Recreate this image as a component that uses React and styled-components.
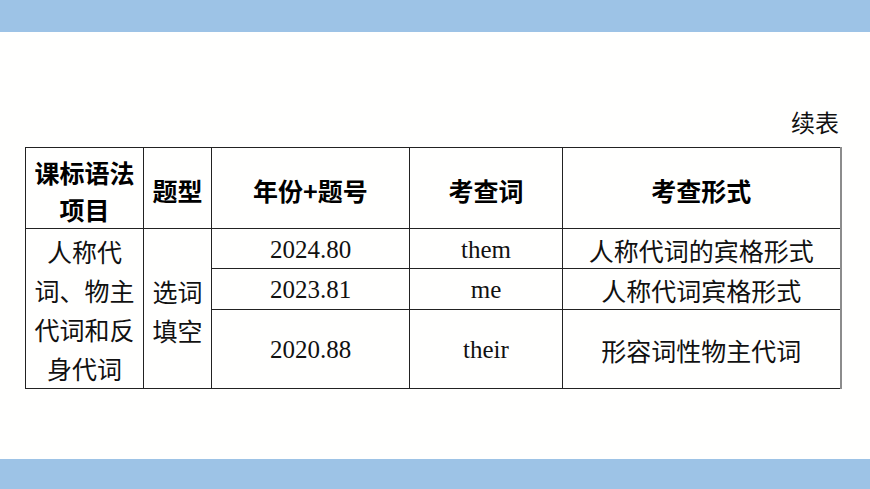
import React from "react";
import styled, { createGlobalStyle } from "styled-components";

const GlobalStyle = createGlobalStyle`
  html, body { margin: 0; padding: 0; background: #ffffff; }
  body { font-family: "Noto Sans CJK SC", "Noto Sans", sans-serif; }
`;

const Page = styled.div`
  width: 870px;
  height: 489px;
  display: flex;
  flex-direction: column;
  background: #ffffff;
  overflow: hidden;
`;

const Bar = styled.div`
  height: ${(p) => p.$h}px;
  flex: none;
  background: #9dc3e6;
`;

const Content = styled.div`
  flex: 1;
  padding: 75px 0 0 25px;
  background: #fffffe;
`;

const Wrap = styled.div`
  width: 815px;
  display: flex;
  flex-direction: column;
`;

const Caption = styled.div`
  text-align: right;
  font-family: "Noto Sans CJK SC", sans-serif;
  font-size: 24px;
  line-height: 30px;
  color: #111;
  padding-right: 1px;
  margin-bottom: 10px;
`;

const Table = styled.table`
  border-collapse: collapse;
  table-layout: fixed;
  width: 815px;
  color: #111;
`;

const Row = styled.tr`
  height: ${(p) => p.$h}px;
`;

const Cell = styled.td`
  border: 1px solid #222;
  padding: ${(p) => (p.$pt != null ? p.$pt : 3)}px 0 0 0;
  text-align: center;
  vertical-align: middle;
  font-family: ${(p) =>
    p.$serif ? '"Liberation Serif", "Times New Roman", serif' : '"Noto Sans CJK SC", sans-serif'};
  font-size: 25px;
  line-height: ${(p) => (p.$lh ? p.$lh : 30)}px;
  font-weight: 400;
  &:last-child { border-right: 2px solid #8c8c8c; }
`;

const Head = styled.th`
  border: 1px solid #222;
  padding: 5px 0 0 0;
  text-align: center;
  vertical-align: middle;
  font-family: "Noto Sans CJK SC", sans-serif;
  font-size: 25px;
  line-height: 37px;
  font-weight: 700;
  color: #000;
  &:last-child { border-right: 2px solid #8c8c8c; }
`;

const rows = [
  { year: "2024.80", word: "them", form: "人称代词的宾格形式", h: 40 },
  { year: "2023.81", word: "me", form: "人称代词宾格形式", h: 40 },
  { year: "2020.88", word: "their", form: "形容词性物主代词", h: 79 },
];

export default function App() {
  return (
    <Page>
      <GlobalStyle />
      <Bar $h={32} />
      <Content>
        <Wrap>
          <Caption>续表</Caption>
          <Table>
            <colgroup>
              <col style={{ width: 118 }} />
              <col style={{ width: 68 }} />
              <col style={{ width: 198 }} />
              <col style={{ width: 153 }} />
              <col style={{ width: 278 }} />
            </colgroup>
            <tbody>
              <Row $h={81}>
                <Head>
                  课标语法
                  <br />
                  项目
                </Head>
                <Head>题型</Head>
                <Head>年份+题号</Head>
                <Head>考查词</Head>
                <Head>考查形式</Head>
              </Row>
              {rows.map((r, i) => (
                <Row key={r.year} $h={r.h}>
                  {i === 0 && (
                    <Cell rowSpan={3} $lh={39} $pt={3}>
                      人称代
                      <br />
                      词、物主
                      <br />
                      代词和反
                      <br />
                      身代词
                    </Cell>
                  )}
                  {i === 0 && (
                    <Cell rowSpan={3} $lh={39} $pt={5}>
                      选词
                      <br />
                      填空
                    </Cell>
                  )}
                  <Cell $serif>{r.year}</Cell>
                  <Cell $serif>{r.word}</Cell>
                  <Cell>{r.form}</Cell>
                </Row>
              ))}
            </tbody>
          </Table>
        </Wrap>
      </Content>
      <Bar $h={30} />
    </Page>
  );
}
